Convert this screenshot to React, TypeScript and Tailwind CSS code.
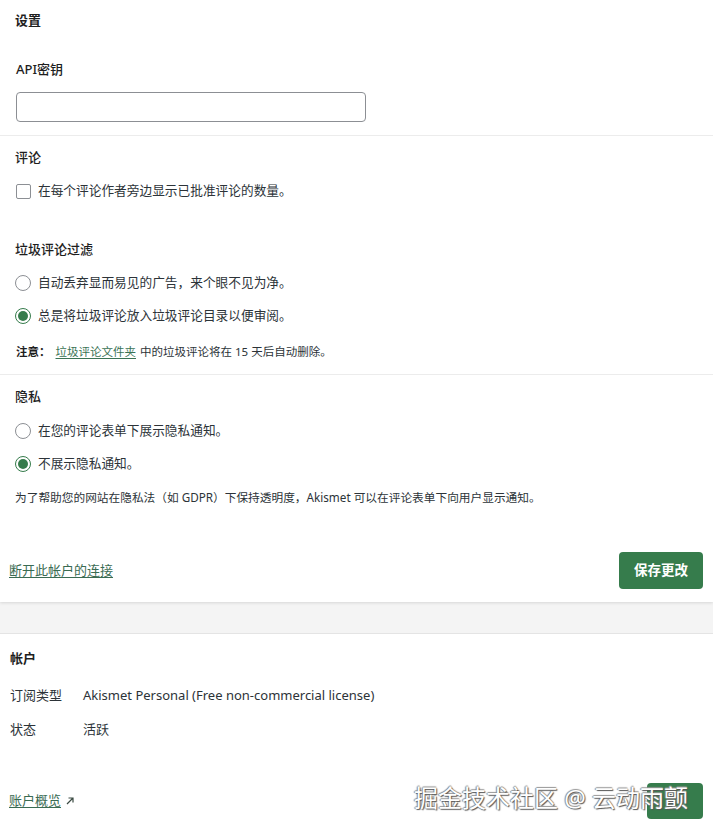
import React from "react";

const font = { fontFamily: "'Noto Sans', 'Noto Sans CJK SC', sans-serif" };

function Radio({ checked }: { checked?: boolean }) {
  return (
    <span
      className={
        "flex h-[16px] w-[16px] shrink-0 items-center justify-center rounded-full border bg-white " +
        (checked ? "border-[#367c4c]" : "border-[#8c8f94]")
      }
    >
      {checked && <span className="h-[10px] w-[10px] rounded-full bg-[#367c4c]" />}
    </span>
  );
}

function Row({ children, control }: { children: React.ReactNode; control: React.ReactNode }) {
  return (
    <div className="flex h-5 items-center gap-[7px] pl-[15px]">
      {control}
      <span className="text-[12.7px] text-[#2c3338]">{children}</span>
    </div>
  );
}

export default function App() {
  return (
    <div className="relative min-h-[832px] w-[713px] bg-[#f4f4f4] text-[#1e1e1e]" style={font}>
      {/* Settings card */}
      <div className="bg-white shadow-[0_1px_3px_rgba(0,0,0,0.12)]">
        <div className="border-b border-[#ececec] pb-[13px] pt-[11px]">
          <div className="flex h-5 items-center pl-[15px] text-[13px] font-semibold">设置</div>
          <div className="mt-[29px] flex h-5 items-center pl-[16px] text-[13px] font-medium">API密钥</div>
          <div className="mt-[12px] pl-[16px]">
            <input className="h-[30px] w-[350px] rounded-[4px] border border-[#8c8f94] bg-white outline-none" />
          </div>
        </div>

        <div className="border-b border-[#ececec] pb-[13px] pt-[12px]">
          <div className="flex h-5 items-center pl-[15px] text-[13px] font-medium">评论</div>
          <div className="mt-[13px]">
            <Row
              control={
                <span className="ml-[1px] h-[15px] w-[15px] shrink-0 rounded-[2px] border border-[#8c8f94] bg-white" />
              }
            >
              在每个评论作者旁边显示已批准评论的数量。
            </Row>
          </div>
          <div className="mt-[39px] flex h-5 items-center pl-[15px] text-[13px] font-medium">垃圾评论过滤</div>
          <div className="mt-[13px]">
            <Row control={<Radio />}>自动丢弃显而易见的广告，来个眼不见为净。</Row>
          </div>
          <div className="mt-[13px]">
            <Row control={<Radio checked />}>总是将垃圾评论放入垃圾评论目录以便审阅。</Row>
          </div>
          <div className="mt-[17px] flex h-[18px] items-center pl-[16px] text-[11.5px] text-[#2c3338]">
            <span className="font-semibold text-[#1e1e1e]">注意：</span>
            <span className="ml-[5px] text-[#3a7355] underline underline-offset-2">垃圾评论文件夹</span>
            <span className="ml-[4px]">中的垃圾评论将在 15 天后自动删除。</span>
          </div>
        </div>

        <div className="pt-[12px]">
          <div className="flex h-5 items-center pl-[15px] text-[13px] font-medium">隐私</div>
          <div className="mt-[14px]">
            <Row control={<Radio />}>在您的评论表单下展示隐私通知。</Row>
          </div>
          <div className="mt-[13px]">
            <Row control={<Radio checked />}>不展示隐私通知。</Row>
          </div>
          <div className="mt-[15px] flex h-[18px] items-center pl-[15px] text-[11.7px] text-[#2c3338]">
            为了帮助您的网站在隐私法（如 GDPR）下保持透明度，Akismet 可以在评论表单下向用户显示通知。
          </div>
        </div>

        <div className="mt-[45px] flex items-center justify-between pb-[13px] pl-[9px] pr-[10px]">
          <span className="text-[13px] text-[#3a6b52] underline underline-offset-2">断开此帐户的连接</span>
          <button className="flex h-[37px] w-[84px] items-center justify-center rounded-[4px] bg-[#367c4c] text-[13.5px] font-semibold text-white">
            保存更改
          </button>
        </div>
      </div>

      {/* Account card */}
      <div className="mt-[31px] border-t border-[#e4e4e4] bg-white pb-[13px] pt-[15px]">
        <div className="flex h-5 items-center pl-[10px] text-[13px] font-semibold">帐户</div>
        <div className="mt-[17px] flex h-5 items-center pl-[10px] text-[13px] text-[#2c3338]">
          <span className="w-[73px]">订阅类型</span>
          <span>Akismet Personal (Free non-commercial license)</span>
        </div>
        <div className="mt-[14px] flex h-5 items-center pl-[10px] text-[13px] text-[#2c3338]">
          <span className="w-[73px]">状态</span>
          <span>活跃</span>
        </div>
        <div className="mt-[43px] flex items-center justify-between pl-[9px] pr-[10px]">
          <span className="flex items-center gap-[4px] text-[13px] text-[#3a6b52]">
            <span className="underline underline-offset-2">账户概览</span>
            <svg width="10" height="10" viewBox="0 0 10 10" fill="none" stroke="#3a4a42" strokeWidth="1.2">
              <path d="M2 8 L8 2 M3.5 2 H8 V6.5" />
            </svg>
          </span>
          <span className="h-[36px] w-[56px] rounded-[4px] bg-[#367c4c]" />
        </div>
      </div>

      {/* Watermark */}
      <div
        className="absolute left-[414px] top-[782px] text-[24px] leading-[32px] text-white"
        style={{ textShadow: "1px 1px 1px #555, -1px 0 1px #888, 0 -1px 1px #999" }}
      >
        掘金技术社区 @ 云动雨颤
      </div>
    </div>
  );
}
